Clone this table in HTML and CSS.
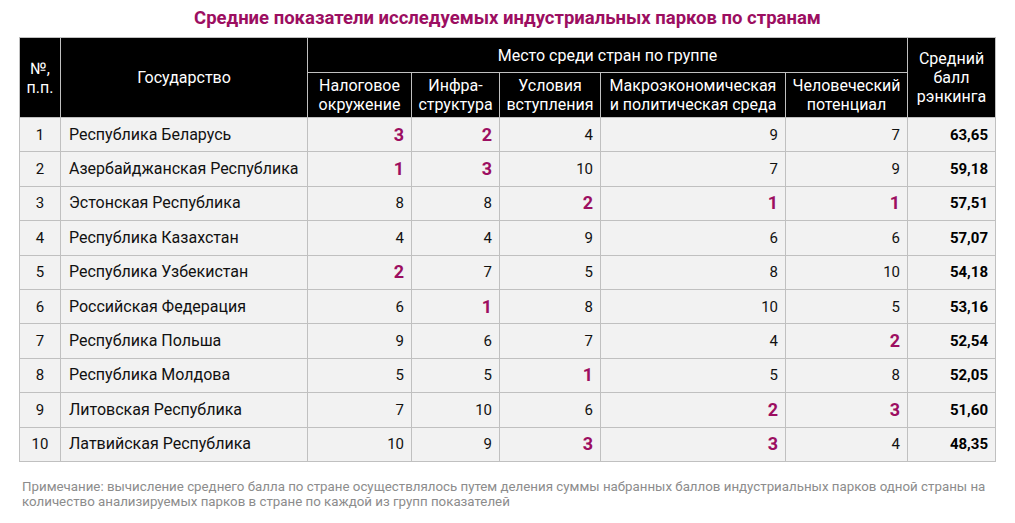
FILE: index.html
```html
<!DOCTYPE html>
<html lang="ru">
<head>
<meta charset="utf-8">
<link rel="stylesheet" href="styles.css">
</head>
<body>
<div class="page">
  <h1 class="title">Средние показатели исследуемых индустриальных парков по странам</h1>
  <table class="tbl">
    <colgroup>
      <col class="c-num"><col class="c-name"><col class="c-a"><col class="c-b"><col class="c-c"><col class="c-d"><col class="c-e"><col class="c-f">
    </colgroup>
    <thead>
      <tr class="h1">
        <th rowspan="2">№,<br>п.п.</th>
        <th rowspan="2" class="top">Государство</th>
        <th colspan="5">Место среди стран по группе</th>
        <th rowspan="2">Средний<br>балл<br>рэнкинга</th>
      </tr>
      <tr class="h2">
        <th>Налоговое<br>окружение</th>
        <th>Инфра-<br>структура</th>
        <th>Условия<br>вступления</th>
        <th>Макроэкономическая<br>и политическая среда</th>
        <th>Человеческий<br>потенциал</th>
      </tr>
    </thead>
    <tbody>
      <tr><td class="n">1</td><td class="s">Республика Беларусь</td><td class="v hi">3</td><td class="v hi">2</td><td class="v">4</td><td class="v">9</td><td class="v">7</td><td class="v sc">63,65</td></tr>
      <tr><td class="n">2</td><td class="s">Азербайджанская Республика</td><td class="v hi">1</td><td class="v hi">3</td><td class="v">10</td><td class="v">7</td><td class="v">9</td><td class="v sc">59,18</td></tr>
      <tr><td class="n">3</td><td class="s">Эстонская Республика</td><td class="v">8</td><td class="v">8</td><td class="v hi">2</td><td class="v hi">1</td><td class="v hi">1</td><td class="v sc">57,51</td></tr>
      <tr><td class="n">4</td><td class="s">Республика Казахстан</td><td class="v">4</td><td class="v">4</td><td class="v">9</td><td class="v">6</td><td class="v">6</td><td class="v sc">57,07</td></tr>
      <tr><td class="n">5</td><td class="s">Республика Узбекистан</td><td class="v hi">2</td><td class="v">7</td><td class="v">5</td><td class="v">8</td><td class="v">10</td><td class="v sc">54,18</td></tr>
      <tr><td class="n">6</td><td class="s">Российская Федерация</td><td class="v">6</td><td class="v hi">1</td><td class="v">8</td><td class="v">10</td><td class="v">5</td><td class="v sc">53,16</td></tr>
      <tr><td class="n">7</td><td class="s">Республика Польша</td><td class="v">9</td><td class="v">6</td><td class="v">7</td><td class="v">4</td><td class="v hi">2</td><td class="v sc">52,54</td></tr>
      <tr><td class="n">8</td><td class="s">Республика Молдова</td><td class="v">5</td><td class="v">5</td><td class="v hi">1</td><td class="v">5</td><td class="v">8</td><td class="v sc">52,05</td></tr>
      <tr><td class="n">9</td><td class="s">Литовская Республика</td><td class="v">7</td><td class="v">10</td><td class="v">6</td><td class="v hi">2</td><td class="v hi">3</td><td class="v sc">51,60</td></tr>
      <tr><td class="n">10</td><td class="s">Латвийская Республика</td><td class="v">10</td><td class="v">9</td><td class="v hi">3</td><td class="v hi">3</td><td class="v">4</td><td class="v sc">48,35</td></tr>
    </tbody>
  </table>
  <p class="note">Примечание: вычисление среднего балла по стране осуществлялось путем деления суммы набранных баллов индустриальных парков одной страны на количество анализируемых парков в стране по каждой из групп показателей</p>
</div>
</body>
</html>
```

FILE: styles.css
```css
html, body {
  margin: 0;
  padding: 0;
  background: #ffffff;
}
body {
  font-family: Roboto, "Noto Sans", sans-serif;
  color: #1a1a1a;
}
.page {
  width: 1015px;
  padding: 0 0 0 19px;
  box-sizing: border-box;
}
.title {
  margin: 0;
  padding: 8px 0 0 0;
  height: 29px;
  box-sizing: border-box;
  width: 977px;
  text-align: center;
  font-size: 18.5px;
  line-height: 21px;
  font-weight: 700;
  color: #9c0e61;
}
.tbl {
  border-collapse: collapse;
  table-layout: fixed;
  width: 977px;
  margin-top: 8px;
  border: 1px solid #c0c0c0;
}
.c-num { width: 41px; }
.c-name { width: 247px; }
.c-a { width: 104px; }
.c-b { width: 88px; }
.c-c { width: 101px; }
.c-d { width: 185px; }
.c-e { width: 122px; }
.c-f { width: 88px; }

th {
  background: #000;
  color: #fff;
  font-weight: 400;
  font-size: 16px;
  line-height: 19px;
  border: 1px solid #c0c0c0;
  padding: 0 1px;
  text-align: center;
}
th.top {
  vertical-align: top;
  padding-top: 30px;
}
.h1 th { height: 34px; }
.h1 th[colspan] { vertical-align: middle; }
.h2 th { height: 44px; }

td {
  background: #f2f2f2;
  border: 1px solid #c0c0c0;
  font-size: 15px;
  line-height: 18px;
  height: 33.4px;
  padding: 0 7px;
  color: #111;
}
td.n { text-align: center; padding: 0; }
td.s { text-align: left; padding-left: 8px; font-size: 16px; }
td.v { text-align: right; }
td.hi {
  color: #9c0e61;
  font-weight: 700;
  font-size: 18px;
}
td.sc { font-weight: 700; color: #000; }

.note {
  margin: 17px 0 0 3px;
  width: 975px;
  font-size: 13.3px;
  line-height: 15px;
  color: #8c8c8c;
}
```
